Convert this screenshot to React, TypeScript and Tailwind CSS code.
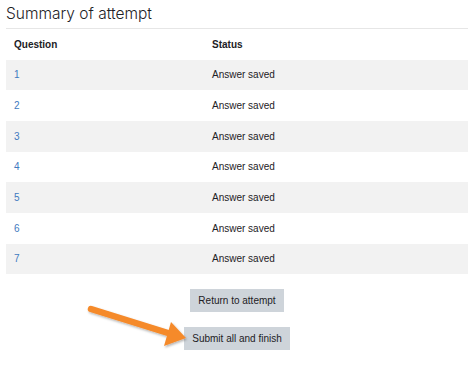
import React from "react";

const rows = [1, 2, 3, 4, 5, 6, 7];

export default function App() {
  return (
    <div className="relative w-[474px] h-[373px] bg-white overflow-hidden text-[#1d2125]" style={{ fontFamily: "'Liberation Sans', Arial, sans-serif" }}>
      <div className="px-[6px]">
        <h2 className="text-[15.5px] font-light leading-[24px] pt-[2px] h-[28px] font-[Inter,sans-serif]">Summary of attempt</h2>
        <table className="w-[462px] border-collapse text-[10px]">
          <thead>
            <tr className="h-[31px] border-t border-[#e6e6e6]">
              <th className="text-left font-bold pl-[8px] w-[206px]">Question</th>
              <th className="text-left font-bold">Status</th>
            </tr>
          </thead>
          <tbody>
            {rows.map((n) => (
              <tr key={n} className={`h-[30.7px] ${n % 2 === 1 ? "bg-[#f2f2f2]" : "bg-white"}`}>
                <td className="pl-[8px] text-[#3f7ac0]">{n}</td>
                <td>Answer saved</td>
              </tr>
            ))}
          </tbody>
        </table>
        <div className="flex flex-col items-center gap-[15px] mt-[15px] w-[462px]">
          <button className="h-[23px] px-[8px] bg-[#ced4da] text-[10px] text-[#1d2125]">Return to attempt</button>
          <button className="h-[23px] px-[8px] bg-[#ced4da] text-[10px] text-[#1d2125]">Submit all and finish</button>
        </div>
      </div>
      <svg className="absolute left-0 top-0 pointer-events-none" width="474" height="373" viewBox="0 0 474 373">
        <defs>
          <filter id="sh" x="-20%" y="-20%" width="140%" height="140%">
            <feDropShadow dx="1" dy="1.5" stdDeviation="1.2" floodColor="#000" floodOpacity="0.3" />
          </filter>
        </defs>
        <g filter="url(#sh)" fill="#f58a2b">
          <line x1="91" y1="309" x2="168" y2="333" stroke="#f58a2b" strokeWidth="6.5" strokeLinecap="round" />
          <polygon points="171,322 186,338 164,346" />
        </g>
      </svg>
    </div>
  );
}
